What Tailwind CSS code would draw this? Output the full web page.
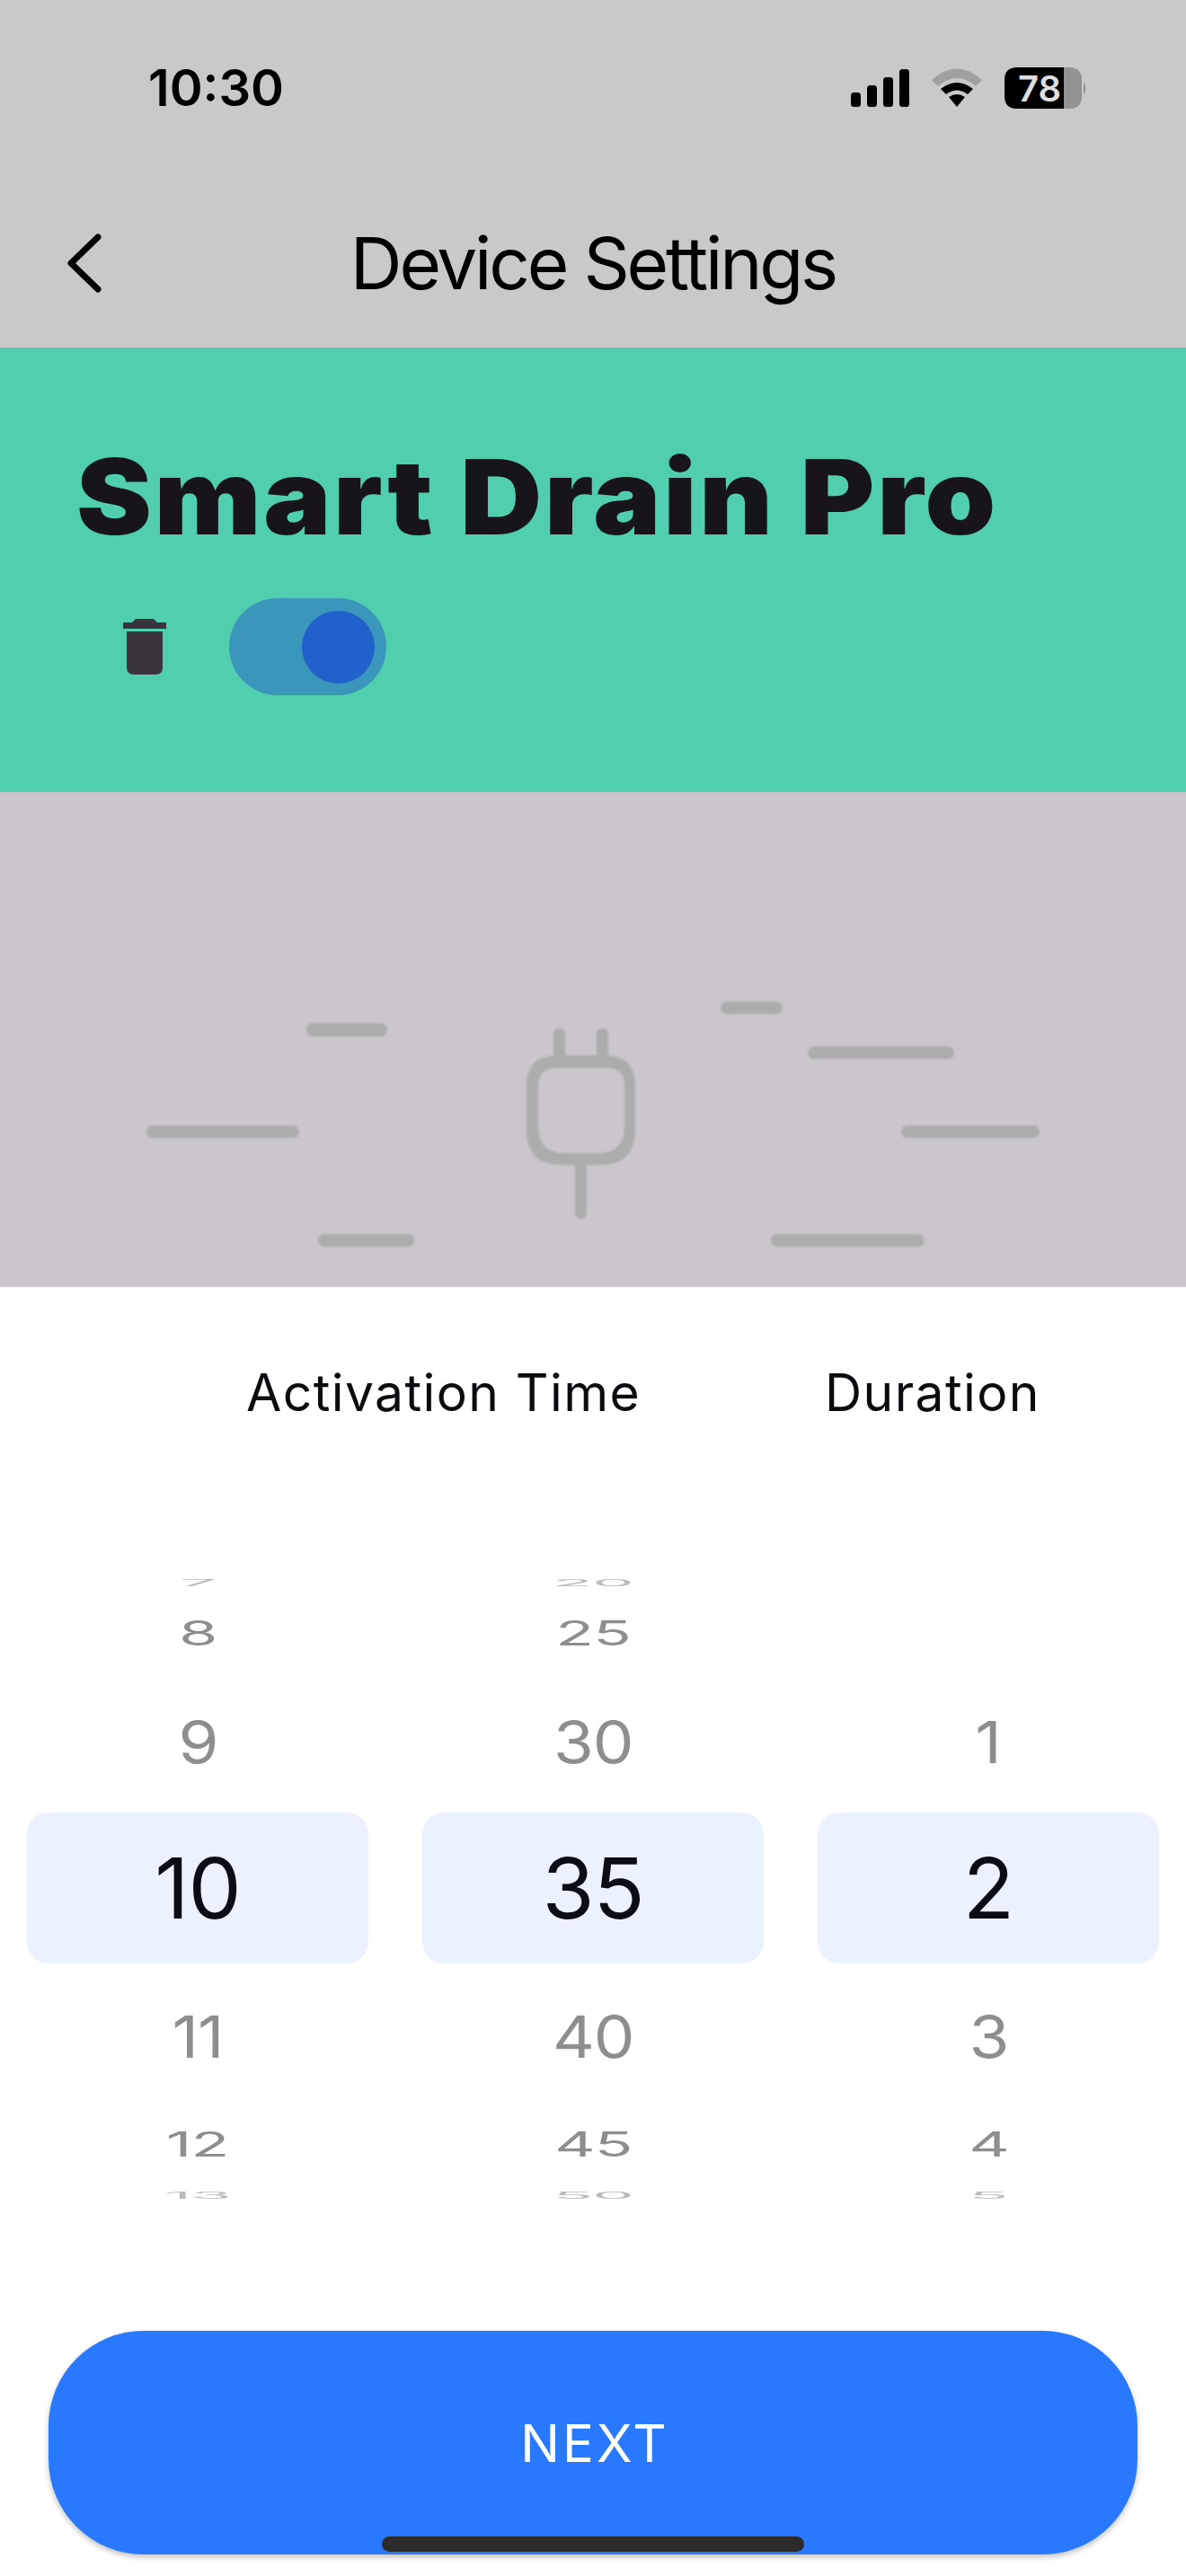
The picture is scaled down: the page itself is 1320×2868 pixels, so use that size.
<!DOCTYPE html>
<html>
<head>
<meta charset="utf-8">
<script src="https://cdn.jsdelivr.net/npm/@tailwindcss/browser@4"></script>
</head>
<body class="m-0 bg-white font-['Inter',sans-serif]">
<div class="relative w-[1320px] h-[2868px] overflow-hidden bg-white">
  <header class="h-[387px] bg-[#c9c9c9] text-black">
    <div class="h-[194px] pt-[70px] pl-[165px] pr-[109px] flex justify-between items-start">
      <span class="text-[56px] leading-[56px] font-semibold tracking-[0px]">10:30</span>
      <svg class="w-[264px] h-[50px] mt-[3px]" viewBox="947 73 264 50">
        <rect x="947" y="103" width="11" height="16" rx="3.5"/>
        <rect x="965" y="95" width="11" height="24" rx="3.5"/>
        <rect x="983" y="86" width="11" height="33" rx="3.5"/>
        <rect x="1001" y="77" width="11" height="42" rx="3.5"/>
        <path d="M1037 89 Q1065 64 1093 89 L1086 96 Q1065 78 1044 96 Z" fill="#a0a0a0"/>
        <path d="M1047 99 Q1065 85 1083 99 L1077 105 Q1065 96 1053 105 Z"/>
        <path d="M1056 108 Q1065 102 1074 108 L1065 119 Z"/>
        <path d="M1184 75 H1190 Q1204 75 1204 89 V107 Q1204 121 1190 121 H1184 Z" fill="#929292"/>
        <path d="M1184 75 H1132 Q1118 75 1118 89 V107 Q1118 121 1132 121 H1184 Z"/>
        <path d="M1206 92 Q1211 98 1206 105 Z" fill="#929292"/>
        <text x="1157" y="113" text-anchor="middle" font-family="Inter, sans-serif" font-size="40" font-weight="600" fill="#dedede">78</text>
      </svg>
    </div>
    <nav class="relative flex justify-center items-start">
      <svg class="absolute left-[74px] top-[66px] w-[40px] h-[66px]" viewBox="0 0 40 66" fill="none" stroke="#000" stroke-width="7" stroke-linecap="round" stroke-linejoin="round"><path d="M35 4 L5 33 L35 62"/></svg>
      <h1 class="mt-[53px] text-[80px] leading-[92px] font-normal tracking-[-3.2px]">Device Settings</h1>
    </nav>
  </header>

  <section class="h-[495px] bg-[#50ceae] pl-[85px] pt-[96px]">
    <h2 class="text-[116px] leading-[140px] font-black text-[#17151a] tracking-[2.6px] whitespace-nowrap origin-left scale-x-[1.085]">Smart Drain Pro</h2>
    <div class="flex items-center mt-[43px] pl-[52px] gap-[70px]">
      <svg class="w-[48px] h-[62px]" viewBox="0 0 48 62" fill="#3a353c"><path d="M14 0 H34 L38 4 H48 V11 H0 V4 H10 Z"/><path d="M4 14 H44 V54 Q44 62 36 62 H12 Q4 62 4 54 Z"/></svg>
      <div class="w-[175px] h-[108px] rounded-[54px] bg-[#3b96bb] flex items-center justify-end pr-[13px]">
        <div class="w-[81px] h-[81px] rounded-full bg-[#2161cb]"></div>
      </div>
    </div>
  </section>

  <section class="h-[551px] bg-[#cac6cc]">
    <svg class="block w-[1320px] h-[551px] blur-[0.8px]" viewBox="0 882 1320 551" fill="#acacac">
      <rect x="341" y="1139" width="90" height="15" rx="7"/>
      <rect x="802" y="1115" width="69" height="14" rx="7"/>
      <rect x="899" y="1165" width="163" height="14" rx="7"/>
      <rect x="163" y="1253" width="170" height="14" rx="7"/>
      <rect x="1003" y="1253" width="154" height="14" rx="7"/>
      <rect x="354" y="1374" width="107" height="14" rx="7"/>
      <rect x="858" y="1374" width="171" height="14" rx="7"/>
      <path fill-rule="evenodd" d="M620 1175 H673 Q707 1175 707 1209 V1258 Q707 1297 668 1297 H625 Q586 1297 586 1258 V1209 Q586 1175 620 1175 Z M619 1189 Q599 1189 599 1209 V1254 Q599 1284 629 1284 H665 Q695 1284 695 1254 V1209 Q695 1189 675 1189 Z"/>
      <rect x="616" y="1145" width="13" height="36" rx="6"/>
      <rect x="664" y="1145" width="13" height="36" rx="6"/>
      <rect x="640" y="1290" width="13" height="67" rx="6"/>
    </svg>
  </section>

  <section class="relative h-[1435px] bg-white">
    <div class="flex pt-[88px] pl-[274px] text-[57px] leading-[60px] tracking-[1.4px] text-[#0b0b10] whitespace-nowrap">
      <span class="w-[644px]">Activation Time</span>
      <span>Duration</span>
    </div>

    <div class="grid grid-cols-3 gap-x-[60px] px-[30px] mt-[169px] text-center text-[#8e8e8e] text-[74px] leading-none tracking-[-1px]">
      <div class="flex flex-col items-center">
        <div class="h-[24px] flex items-center"><span class="inline-block scale-y-[0.13] opacity-60">7</span></div>
        <div class="h-[88px] flex items-center"><span class="inline-block scale-y-[0.52] scale-x-[0.95]">8</span></div>
        <div class="h-[154px] flex items-center"><span class="inline-block scale-y-[0.88] scale-x-[0.98]">9</span></div>
        <div class="mt-[2px] w-full h-[168px] rounded-[24px] bg-[#ebf1fd] flex items-center justify-center text-[94px] text-[#0a0c16] tracking-[-1px]">10</div>
        <div class="h-[162px] flex items-center"><span class="inline-block scale-y-[0.88] scale-x-[0.98]">11</span></div>
        <div class="h-[78px] flex items-center"><span class="inline-block scale-y-[0.52] scale-x-[0.95]">12</span></div>
        <div class="h-[36px] flex items-center"><span class="inline-block scale-y-[0.13] opacity-60">13</span></div>
      </div>
      <div class="flex flex-col items-center">
        <div class="h-[24px] flex items-center"><span class="inline-block scale-y-[0.13] opacity-60">20</span></div>
        <div class="h-[88px] flex items-center"><span class="inline-block scale-y-[0.52] scale-x-[0.95]">25</span></div>
        <div class="h-[154px] flex items-center"><span class="inline-block scale-y-[0.88] scale-x-[0.98]">30</span></div>
        <div class="mt-[2px] w-full h-[168px] rounded-[24px] bg-[#ebf1fd] flex items-center justify-center text-[94px] text-[#0a0c16] tracking-[-1px]">35</div>
        <div class="h-[162px] flex items-center"><span class="inline-block scale-y-[0.88] scale-x-[0.98]">40</span></div>
        <div class="h-[78px] flex items-center"><span class="inline-block scale-y-[0.52] scale-x-[0.95]">45</span></div>
        <div class="h-[36px] flex items-center"><span class="inline-block scale-y-[0.13] opacity-60">50</span></div>
      </div>
      <div class="flex flex-col items-center">
        <div class="h-[112px]"></div>
        <div class="h-[154px] flex items-center"><span class="inline-block scale-y-[0.88] scale-x-[0.98]">1</span></div>
        <div class="mt-[2px] w-full h-[168px] rounded-[24px] bg-[#ebf1fd] flex items-center justify-center text-[94px] text-[#0a0c16]">2</div>
        <div class="h-[162px] flex items-center"><span class="inline-block scale-y-[0.88] scale-x-[0.98]">3</span></div>
        <div class="h-[78px] flex items-center"><span class="inline-block scale-y-[0.52] scale-x-[0.95]">4</span></div>
        <div class="h-[36px] flex items-center"><span class="inline-block scale-y-[0.13] opacity-60">5</span></div>
      </div>
    </div>

    <div class="mt-[133px] mx-[54px] h-[249px] rounded-[106px] bg-[#2979ff] shadow-[0_3px_6px_rgba(0,0,0,0.25)] flex items-center justify-center pl-[4px] text-white text-[58px] leading-none tracking-[3px]">NEXT</div>
  </section>
  <div class="absolute left-[425px] top-[2824px] w-[470px] h-[17px] rounded-[9px] bg-[#2b2b2b]"></div>
</div>
</body>
</html>
